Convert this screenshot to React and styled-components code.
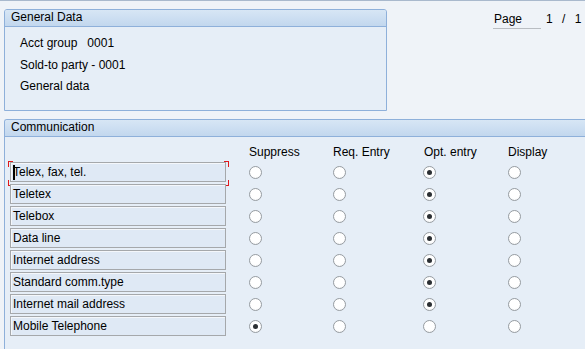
import React from "react";
import styled, { createGlobalStyle } from "styled-components";

const Global = createGlobalStyle`
  html, body { margin: 0; padding: 0; }
  body {
    background: #eff3f8;
    font-family: "Liberation Sans", Arial, sans-serif;
    font-size: 12px;
    color: #000;
    overflow: hidden;
    width: 585px;
    height: 349px;
  }
`;

const Page = styled.div`
  width: 585px;
  height: 349px;
  border-top: 1px solid #a9b9cd;
  box-sizing: border-box;
  overflow: hidden;
`;

const TopArea = styled.div`
  display: flex;
  align-items: flex-start;
  padding: 8px 0 0 4px;
`;

const Group = styled.section`
  box-sizing: border-box;
  width: ${(p) => p.$width};
  height: ${(p) => p.$height};
  border: 1px solid #8eb0da;
  border-radius: 3px 3px 0 0;
  background: #e6eef7;
  ${(p) => (p.$open ? "border-right: none; border-bottom: none;" : "")}
`;

const GroupHeader = styled.div`
  line-height: 15px;
  padding-left: 6px;
  background: linear-gradient(#d7e6f5, #c2d7ee);
  border-bottom: 1px solid #8eb0da;
  box-sizing: border-box;
  height: 17px;
  border-radius: 2px 2px 0 0;
`;

const InfoList = styled.div`
  display: flex;
  flex-direction: column;
  gap: 5.5px;
  padding: 8px 0 0 15px;
`;

const InfoLine = styled.div`
  height: 16px;
  line-height: 16px;
  white-space: pre;
`;

const Pager = styled.div`
  display: flex;
  align-items: flex-start;
  margin-left: 106px;
  margin-top: 2px;
  gap: 5px;
`;

const PageLabel = styled.div`
  width: 48px;
  box-sizing: border-box;
  padding-left: 1px;
  height: 18px;
  line-height: 16px;
  border-bottom: 1px solid #b9bdc2;
`;

const PageNum = styled.div`
  line-height: 16px;
  word-spacing: 6px;
  white-space: pre;
`;

const CommArea = styled.div`
  padding: 8px 0 0 4px;
`;

const CommBody = styled.div`
  display: grid;
  grid-template-columns: 239px 84px 90px 85px 80px;
  grid-template-rows: 23px;
  grid-auto-rows: 22px;
  padding: 0 0 0 5px;
`;

const ColHead = styled.div`
  height: 23px;
  line-height: 30px;
  white-space: nowrap;
  padding-left: ${(p) => p.$pad || 0}px;
`;

const FieldCell = styled.div`
  position: relative;
  padding-top: 2px;
`;

const Field = styled.div`
  box-sizing: border-box;
  width: 216px;
  height: 20px;
  line-height: 19px;
  padding-left: 2px;
  border: 1px solid #a5a8ab;
  background: #dfe9f5;
  box-shadow: inset 1px 1px 0 #f4f7fb;
  white-space: nowrap;
`;

const Corner = styled.span`
  position: absolute;
  width: 4px;
  height: 5px;
  border: 0 solid #e0191c;
  ${(p) => (p.$t ? "top: 1px; border-top-width: 1px;" : "top: 20px; border-bottom-width: 1px;")}
  ${(p) => (p.$l ? "left: -2px; border-left-width: 1px;" : "left: 214px; border-right-width: 1px;")}
`;

const Caret = styled.span`
  position: absolute;
  left: 3px;
  top: 5px;
  width: 2px;
  height: 15px;
  background: #000;
`;

const RadioCell = styled.div`
  display: flex;
  align-items: center;
  padding-left: ${(p) => p.$pad || 0}px;
  padding-top: 2px;
`;

const Radio = styled.span`
  box-sizing: border-box;
  width: 13px;
  height: 13px;
  border-radius: 50%;
  border: 1px solid #979ca1;
  background: radial-gradient(circle at 50% 40%, #ffffff 55%, #eef0f2 100%);
  display: flex;
  align-items: center;
  justify-content: center;
  &::after {
    content: "";
    width: 5px;
    height: 5px;
    border-radius: 50%;
    background: ${(p) => (p.$on ? "#2b2f33" : "transparent")};
  }
`;

const rows = [
  ["Telex, fax, tel.", 2],
  ["Teletex", 2],
  ["Telebox", 2],
  ["Data line", 2],
  ["Internet address", 2],
  ["Standard comm.type", 2],
  ["Internet mail address", 2],
  ["Mobile Telephone", 0],
];

const heads = [
  ["Suppress", 0],
  ["Req. Entry", 0],
  ["Opt. entry", 1],
  ["Display", 0],
];
const radioPads = [0, 0, 0, 0];

export default function App() {
  return (
    <>
      <Global />
      <Page>
        <TopArea>
          <Group $width="383px" $height="102px">
            <GroupHeader>General Data</GroupHeader>
            <InfoList>
              <InfoLine>Acct group   0001</InfoLine>
              <InfoLine>Sold-to party - 0001</InfoLine>
              <InfoLine>General data</InfoLine>
            </InfoList>
          </Group>
          <Pager>
            <PageLabel>Page</PageLabel>
            <PageNum>{"1 / 1"}</PageNum>
          </Pager>
        </TopArea>
        <CommArea>
          <Group $width="600px" $height="260px" $open>
            <GroupHeader>Communication</GroupHeader>
            <CommBody>
              <ColHead />
              {heads.map(([h, pad]) => (
                <ColHead key={h} $pad={pad}>{h}</ColHead>
              ))}
              {rows.map(([label, sel], i) => (
                <React.Fragment key={label}>
                  <FieldCell>
                    <Field>{label}</Field>
                    {i === 0 && (
                      <>
                        <Corner $t $l />
                        <Corner $t />
                        <Corner $l />
                        <Corner />
                        <Caret />
                      </>
                    )}
                  </FieldCell>
                  {[0, 1, 2, 3].map((c) => (
                    <RadioCell key={c} $pad={radioPads[c]}>
                      <Radio $on={sel === c} />
                    </RadioCell>
                  ))}
                </React.Fragment>
              ))}
            </CommBody>
          </Group>
        </CommArea>
      </Page>
    </>
  );
}
